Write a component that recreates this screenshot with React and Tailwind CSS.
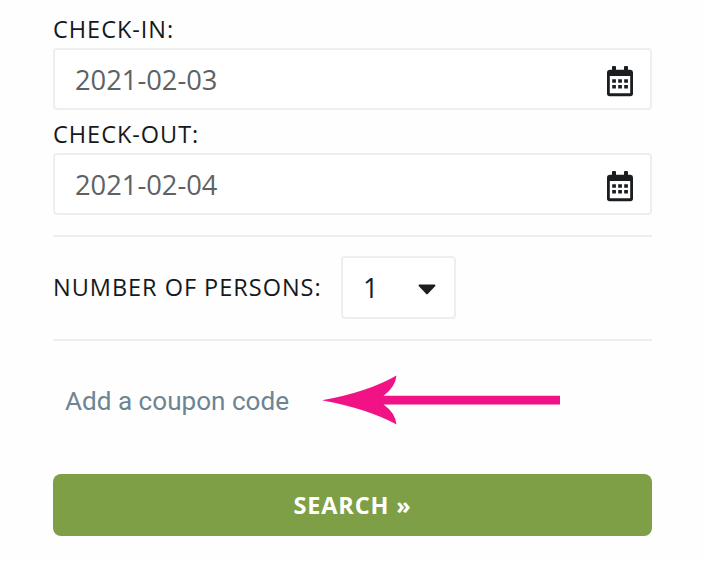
function CalendarIcon() {
    return (
        <svg width="27" height="31" viewBox="0 0 27 31" className="shrink-0" aria-hidden="true">
            <path
                fill="#1b1e20"
                fillRule="evenodd"
                d="M3 3.700H5V1Q5 0 6 0H8Q9 0 9 1V3.700H17V1Q17 0 18 0H20Q21 0 21 1V3.700H23.500Q26 4 26 6.500V27.500Q26 30.200 23.300 30.200H2.700Q0 30.200 0 27.500V6.500Q0 4 3 3.700ZM2.800 10V27.300H23.200V10Z"
            />
            <path fill="#1b1e20" d="M5.200 13.300h3.700v3.500H5.200zM11.200 13.300h3.700v3.500h-3.700zM17.200 13.300h3.700v3.500h-3.700zM5.200 19h3.700v3.500H5.200zM11.200 19h3.700v3.500h-3.700zM17.200 19h3.700v3.500h-3.700z" />
        </svg>
    );
}

function DateField({ label, value }) {
    return (
        <div>
            <div className="flex h-[43px] items-end pb-[1px] text-[23.5px] leading-[36px] tracking-[0.98px] text-[#15191c]">{label}</div>
            <div className="flex h-[62px] items-center justify-between rounded-[4px] border-2 border-[#eeeeee] bg-white pr-4 pl-5">
                <span className="pt-px text-[27.3px] leading-9 text-[#5e6265]">{value}</span>
                <span className="pt-[4px]">
                    <CalendarIcon />
                </span>
            </div>
        </div>
    );
}

function PersonsSelect() {
    return (
        <button type="button" className="flex h-[63px] w-[115px] items-center justify-between rounded-[4px] border-2 border-[#eeeeee] bg-white pr-[18px] pl-5">
            <span className="pt-px text-[27px] leading-9 text-[#15222b]">1</span>
            <svg width="18" height="11" viewBox="0 0 18 11" className="mt-[5px]" aria-hidden="true">
                <path fill="#1b1e20" d="M1.500 0.500h15q1.300 0 .8 1.500L10 9.700q-1 1-2 0L.7 2Q0 .5 1.500.5Z" />
            </svg>
        </button>
    );
}

export default function App() {
    return (
        <div className="h-[561px] w-[705px] bg-[#fefefe] pt-[5px] pr-[53px] pl-[53px] font-['Open_Sans',sans-serif]">
            <DateField label="CHECK-IN:" value="2021-02-03" />
            <DateField label="CHECK-OUT:" value="2021-02-04" />

            <div className="mt-5 flex h-[106px] items-center border-y-2 border-[#eeeeee] pb-[2px]">
                <span className="w-[288px] text-[23.5px] leading-9 tracking-[0.98px] whitespace-nowrap text-[#15191c]">NUMBER OF PERSONS:</span>
                <PersonsSelect />
            </div>

            <div className="flex h-[133px] items-center pl-3">
                <a href="#coupon" className="w-[257px] pb-[13px] font-[Roboto,sans-serif] text-[26.1px] leading-9 whitespace-nowrap text-[#6d8592]">
                    Add a coupon code
                </a>
                <svg width="239" height="50" viewBox="0 0 239 50" className="mb-[15px] shrink-0" aria-hidden="true">
                    <path fill="#f11285" d="M0 25.300Q46 17 74.500 0.500Q73.500 12 61.500 20.800H238V29.500H61.500Q73.500 38 74.500 49.500Q46 34 0 25.300Z" />
                </svg>
            </div>

            <button type="button" className="flex h-[62px] w-full items-center justify-center rounded-lg bg-[#7e9f45] text-[23.5px] leading-9 font-bold tracking-[0.85px] text-white">
                SEARCH »
            </button>
        </div>
    );
}
